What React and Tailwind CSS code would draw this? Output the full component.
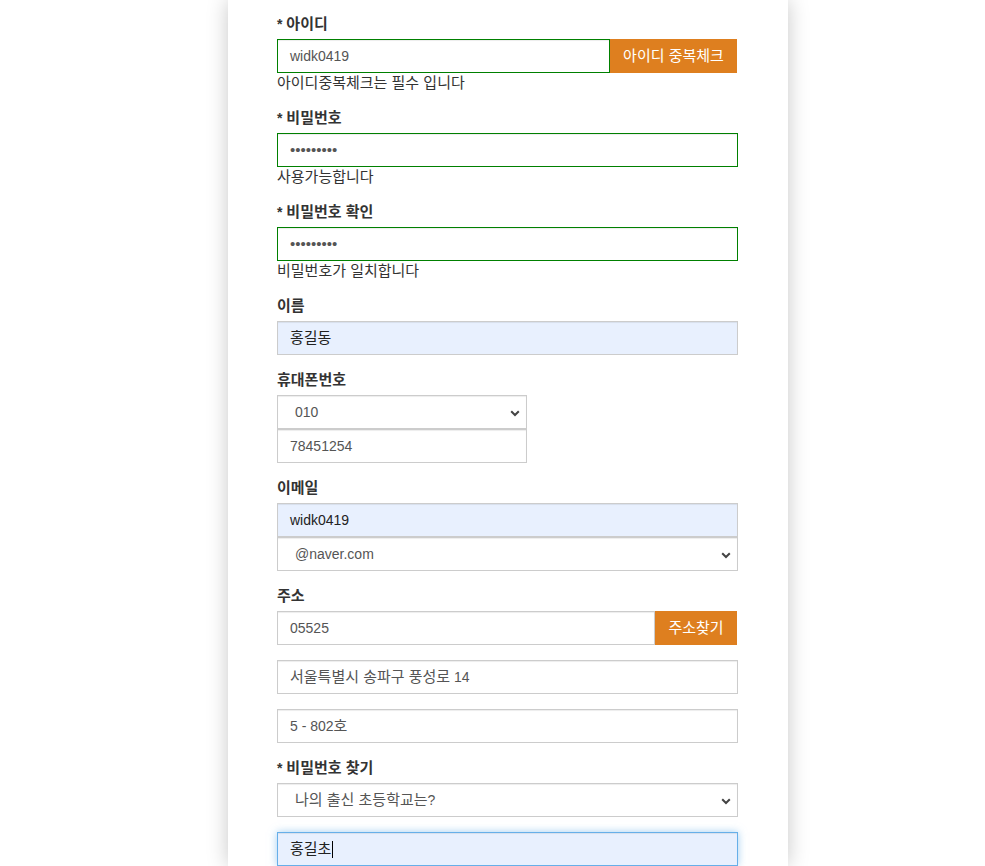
import React from "react";

const font = { fontFamily: '"Liberation Sans", "Noto Sans CJK KR", Arial, sans-serif' };

function K({ children }) {
  return <span className="text-[15px]">{children}</span>;
}

function Label({ children }) {
  return (
    <div className="mb-[5px] h-5 text-[14px] font-bold leading-5 text-[#333]">{children}</div>
  );
}

function Input({ value, className = "", border = "border-[#ccc]", bg = "bg-white", color = "text-[#555]" }) {
  return (
    <div
      className={`flex h-[34px] items-center border ${border} ${bg} ${color} px-3 text-[14px] leading-5 shadow-[inset_0_1px_1px_rgba(0,0,0,0.075)] ${className}`}
    >
      {value}
    </div>
  );
}

function Chevron() {
  return (
    <svg width="10" height="7" viewBox="0 0 10 7" className="absolute right-[6px] top-[14px]">
      <path d="M1.2 1.2 L5 5 L8.8 1.2" fill="none" stroke="#444" strokeWidth="2" />
    </svg>
  );
}

function Select({ value, className = "" }) {
  return (
    <div
      className={`relative flex h-[34px] items-center border border-[#ccc] bg-white pl-[17px] text-[14px] leading-5 text-[#555] shadow-[inset_0_1px_1px_rgba(0,0,0,0.075)] ${className}`}
    >
      {value}
      <Chevron />
    </div>
  );
}

function Helper({ children }) {
  return <div className="h-5 text-[14px] leading-5 text-[#333]">{children}</div>;
}

function OrangeBtn({ children, className = "" }) {
  return (
    <div
      className={`flex h-[34px] shrink-0 items-center justify-center bg-[#de7f1f] text-[14px] leading-5 text-white ${className}`}
    >
      {children}
    </div>
  );
}

const Dots = () => <span className="text-[15px] text-[#555]">•••••••••</span>;

export default function App() {
  return (
    <div className="min-h-[866px] overflow-hidden bg-white" style={font}>
      <div className="ml-[228px] min-h-[866px] w-[560px] bg-white pl-[49px] pr-[50px] pt-[14px] shadow-[0_0_20px_rgba(0,0,0,0.22)]">
        <div className="w-[461px]">
          {/* 아이디 */}
          <div className="mb-[15px]">
            <Label>* <K>아이디</K></Label>
            <div className="flex">
              <Input value="widk0419" border="border-[#008000]" className="flex-1" />
              <OrangeBtn className="mr-[1px] w-[127px]"><K>아이디 중복체크</K></OrangeBtn>
            </div>
            <Helper><K>아이디중복체크는 필수 입니다</K></Helper>
          </div>

          {/* 비밀번호 */}
          <div className="mb-[15px]">
            <Label>* <K>비밀번호</K></Label>
            <Input value={<Dots />} border="border-[#008000]" />
            <Helper><K>사용가능합니다</K></Helper>
          </div>

          {/* 비밀번호 확인 */}
          <div className="mb-[15px]">
            <Label>* <K>비밀번호 확인</K></Label>
            <Input value={<Dots />} border="border-[#008000]" />
            <Helper><K>비밀번호가 일치합니다</K></Helper>
          </div>

          {/* 이름 */}
          <div className="mb-[15px]">
            <Label><K>이름</K></Label>
            <Input value={<K>홍길동</K>} bg="bg-[#e8f0fe]" color="text-[#222]" />
          </div>

          {/* 휴대폰번호 */}
          <div className="mb-[15px]">
            <Label><K>휴대폰번호</K></Label>
            <div className="w-[250px]">
              <Select value="010" />
              <Input value="78451254" />
            </div>
          </div>

          {/* 이메일 */}
          <div className="mb-[15px]">
            <Label><K>이메일</K></Label>
            <Input value="widk0419" bg="bg-[#e8f0fe]" color="text-[#222]" />
            <Select value="@naver.com" />
          </div>

          {/* 주소 */}
          <div className="mb-[15px]">
            <Label><K>주소</K></Label>
            <div className="flex">
              <Input value="05525" className="flex-1" />
              <OrangeBtn className="mr-[1px] w-[82px]"><K>주소찾기</K></OrangeBtn>
            </div>
            <Input value={<span><K>서울특별시 송파구 풍성로</K> 14</span>} className="mt-[15px]" />
            <Input value={<span>5 - 802<K>호</K></span>} className="mt-[15px]" />
          </div>

          {/* 비밀번호 찾기 */}
          <div className="mb-[15px]">
            <Label>* <K>비밀번호 찾기</K></Label>
            <Select value={<span><K>나의 출신 초등학교는</K>?</span>} />
            <div className="mt-[15px] flex h-[34px] items-center border border-[#66afe9] bg-[#e8f0fe] px-3 text-[14px] leading-5 text-[#222] shadow-[inset_0_1px_1px_rgba(0,0,0,0.075),0_0_8px_rgba(102,175,233,0.6)]">
              <K>홍길초</K>
              <span className="ml-[1px] inline-block h-[17px] w-px bg-black" />
            </div>
          </div>
        </div>
      </div>
    </div>
  );
}
